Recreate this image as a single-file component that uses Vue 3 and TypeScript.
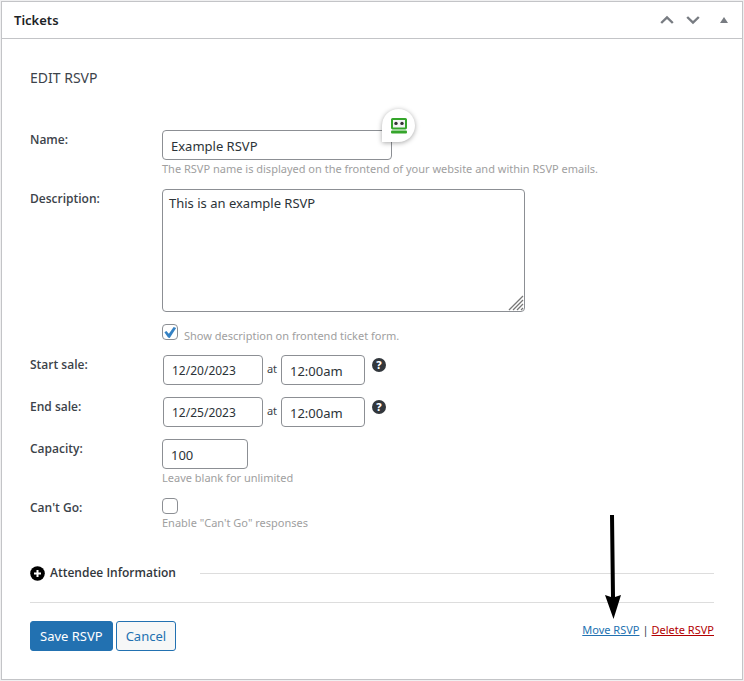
<script setup lang="ts">
import { reactive } from 'vue'

interface SaleRow {
  id: string
  label: string
  date: string
  time: string
}

const form = reactive({
  name: 'Example RSVP',
  description: 'This is an example RSVP',
  showDescription: true,
  capacity: '100',
  cantGo: false,
})

const sales = reactive<SaleRow[]>([
  { id: 'start', label: 'Start sale:', date: '12/20/2023', time: '12:00am' },
  { id: 'end', label: 'End sale:', date: '12/25/2023', time: '12:00am' },
])
</script>

<template>
  <section class="panel">
    <header class="panel-head">
      <h2>Tickets</h2>
      <div class="handles">
        <button type="button" aria-label="Move up">
          <svg width="14" height="14" viewBox="0 0 14 14"><path d="M1.2 10 7 4.4 12.8 10" /></svg>
        </button>
        <button type="button" aria-label="Move down">
          <svg width="14" height="14" viewBox="0 0 14 14"><path d="M1.2 4 7 9.6 12.8 4" /></svg>
        </button>
        <button type="button" class="toggle" aria-label="Toggle panel">
          <svg width="8" height="14" viewBox="0 0 8 14"><path class="solid" d="M4 4 8 10H0Z" /></svg>
        </button>
      </div>
    </header>

    <form class="panel-body" @submit.prevent>
      <h3>EDIT RSVP</h3>

      <div class="rows">
        <div class="row">
          <label class="title" for="name">Name:</label>
          <div class="field">
            <div class="name-box">
              <input id="name" v-model="form.name" type="text" class="text" />
              <span class="bubble">
                <svg width="18" height="18" viewBox="0 0 18 18">
                  <rect x="2" y="2" width="14" height="9.4" rx="0.6" fill="#f4f4f6" stroke="#35a52b" stroke-width="2" />
                  <rect x="1" y="13.4" width="16" height="3" rx="1" fill="#35a52b" />
                  <circle cx="6" cy="6.4" r="1.7" fill="#333" />
                  <circle cx="12" cy="6.4" r="1.7" fill="#333" />
                </svg>
              </span>
            </div>
            <p class="help">The RSVP name is displayed on the frontend of your website and within RSVP emails.</p>
          </div>
        </div>

        <div class="row">
          <label class="title" for="description">Description:</label>
          <div class="field">
            <div class="area-box">
              <textarea id="description" v-model="form.description" class="area"></textarea>
              <svg class="grip" width="16" height="16" viewBox="0 0 16 16">
                <path d="M1 15 15 1M5 15 15 5M9 15 15 9M13 15 15 13" />
              </svg>
            </div>
            <label class="check-line">
              <input v-model="form.showDescription" type="checkbox" class="check" />
              <span>Show description on frontend ticket form.</span>
            </label>
          </div>
        </div>

        <div v-for="sale in sales" :key="sale.id" class="row">
          <label class="title" :for="sale.id">{{ sale.label }}</label>
          <div class="field sale">
            <input :id="sale.id" v-model="sale.date" type="text" class="text date" />
            <span class="at">at</span>
            <input v-model="sale.time" type="text" class="text time" :aria-label="sale.label + ' time'" />
            <button type="button" class="tip" aria-label="Help">?</button>
          </div>
        </div>

        <div class="row">
          <label class="title" for="capacity">Capacity:</label>
          <div class="field">
            <input id="capacity" v-model="form.capacity" type="text" class="text capacity" />
            <p class="help">Leave blank for unlimited</p>
          </div>
        </div>

        <div class="row">
          <label class="title" for="cant-go">Can't Go:</label>
          <div class="field">
            <input id="cant-go" v-model="form.cantGo" type="checkbox" class="check" />
            <p class="help">Enable "Can't Go" responses</p>
          </div>
        </div>
      </div>

      <div class="attendee">
        <button type="button" class="expand">
          <svg width="15" height="15" viewBox="0 0 15 15">
            <circle cx="7.5" cy="7.5" r="7.3" fill="#000" />
            <path d="M7.5 4v7M4 7.5h7" stroke="#fff" stroke-width="2" />
          </svg>
          Attendee Information
        </button>
        <span class="rule"></span>
      </div>

      <footer class="actions">
        <div class="buttons">
          <button type="submit" class="btn primary">Save RSVP</button>
          <button type="button" class="btn">Cancel</button>
        </div>
        <div class="links">
          <span class="move">
            <a href="#move">Move RSVP</a>
            <svg class="arrow" width="16" height="104" viewBox="0 0 16 104">
              <path d="M5 0H9L10 82 16 80 8.500 104 0 80 6 82Z" />
            </svg>
          </span>
          <span>|</span>
          <a href="#delete" class="delete">Delete RSVP</a>
        </div>
      </footer>
    </form>
  </section>
</template>

<style>
body {
  background: #f0f0f1;
}
</style>

<style scoped>
* {
  box-sizing: border-box;
}
.panel {
  margin: 1px;
  border: 1px solid #c3c4c7;
  background: #fff;
  color: #3c434a;
  font-family: "Noto Sans", "Open Sans", sans-serif;
  font-size: 12px;
  line-height: 20px;
}
button,
input,
textarea {
  font: inherit;
  margin: 0;
}
h2,
h3,
p {
  margin: 0;
}
.panel-head {
  display: flex;
  align-items: center;
  justify-content: space-between;
  height: 37px;
  padding: 0 12px;
  border-bottom: 1px solid #c3c4c7;
}
h2 {
  font-size: 13px;
  font-weight: 600;
  line-height: 22px;
  color: #1d2327;
}
.handles {
  display: flex;
  gap: 12px;
}
.handles button {
  display: flex;
  padding: 0;
  border: 0;
  background: none;
}
.handles .toggle {
  margin: 0 2px 0 8px;
}
.handles path {
  fill: none;
  stroke: #787c82;
  stroke-width: 2.4;
}
.handles .solid {
  fill: #787c82;
  stroke: none;
}
.panel-body {
  padding: 29px 28px 28px;
}
h3 {
  margin-bottom: 42px;
  font-size: 14px;
  font-weight: 400;
}
.rows {
  display: flex;
  flex-direction: column;
  gap: 11px;
}
.row {
  display: grid;
  grid-template-columns: 132px minmax(0, 1fr);
  min-height: 31px;
}
.title {
  font-family: "Open Sans", "Noto Sans", sans-serif;
  font-weight: 600;
}
.field {
  display: flex;
  flex-direction: column;
  align-items: flex-start;
}
.text,
.area {
  border: 1px solid #8c8f94;
  border-radius: 4px;
  background: #fff;
  color: #2c3338;
  font-size: 13px;
}
.text {
  height: 30px;
  padding: 1px 8px 0;
}
.name-box {
  position: relative;
  display: flex;
  width: 230px;
}
.name-box .text {
  width: 100%;
}
.bubble {
  position: absolute;
  right: -23px;
  top: -21px;
  display: flex;
  align-items: center;
  justify-content: center;
  width: 33px;
  height: 33px;
  border-radius: 17px 17px 17px 0;
  background: #fff;
  box-shadow: 0 1px 5px rgba(0, 0, 0, 0.35);
}
.help {
  font-size: 11px;
  line-height: 18px;
  color: #a0a0a0;
}
.area-box {
  position: relative;
  display: flex;
  width: 363px;
  max-width: 100%;
}
.area {
  width: 100%;
  height: 123px;
  padding: 3px 6px;
  resize: none;
}
.grip {
  position: absolute;
  right: 1px;
  bottom: 1px;
  fill: none;
  stroke: #777;
  stroke-width: 1.3;
  pointer-events: none;
}
.check-line {
  display: flex;
  gap: 6px;
  height: 20px;
  margin-top: 12px;
  font-size: 11px;
  line-height: 24px;
  color: #a0a0a0;
}
.check {
  appearance: none;
  flex: none;
  width: 16px;
  height: 16px;
  border: 1px solid #8c8f94;
  border-radius: 4px;
  background: #fff;
}
.check:checked::before {
  content: "";
  display: block;
  width: 14px;
  height: 14px;
  background: #3582c4;
  clip-path: polygon(10% 52%, 24% 42%, 42% 62%, 76% 14%, 94% 22%, 48% 92%, 36% 90%);
}
.sale {
  flex-direction: row;
  padding-left: 1px;
}
.date {
  width: 100px;
  font-size: 12px;
}
.at {
  width: 18px;
  text-align: center;
  font-size: 11px;
  line-height: 28px;
}
.time {
  width: 84px;
}
.tip {
  width: 14px;
  height: 14px;
  margin: 3px 0 0 7px;
  padding: 0;
  border: 0;
  border-radius: 50%;
  background: #32373c;
  color: #fff;
  font-size: 11px;
  font-weight: 800;
  line-height: 14px;
}
.capacity {
  width: 86px;
}
.attendee {
  display: flex;
  align-items: center;
  margin-top: 31px;
}
.expand {
  display: flex;
  align-items: center;
  gap: 5px;
  width: 170px;
  padding: 0;
  border: 0;
  background: none;
  color: #32373c;
  font-family: "Open Sans", "Noto Sans", sans-serif;
  font-weight: 600;
  white-space: nowrap;
}
.rule {
  flex: 1;
  border-top: 1px solid #ddd;
}
.actions {
  display: flex;
  justify-content: space-between;
  margin-top: 19px;
  padding-top: 18px;
  border-top: 1px solid #ddd;
}
.buttons {
  display: flex;
  gap: 3px;
}
.btn {
  height: 30px;
  padding: 0 9px;
  border: 1px solid #2271b1;
  border-radius: 3px;
  background: #f6f7f7;
  color: #2271b1;
  font-size: 13px;
  white-space: nowrap;
}
.btn.primary {
  background: #2271b1;
  color: #fff;
}
.links {
  display: flex;
  gap: 3px;
  font-size: 11px;
  line-height: 18px;
}
.move {
  position: relative;
}
.links a {
  color: #2271b1;
  text-decoration: underline;
}
.links .delete {
  color: #b20000;
}
.arrow {
  position: absolute;
  left: 23px;
  top: -106px;
  fill: #000;
  pointer-events: none;
}
</style>
